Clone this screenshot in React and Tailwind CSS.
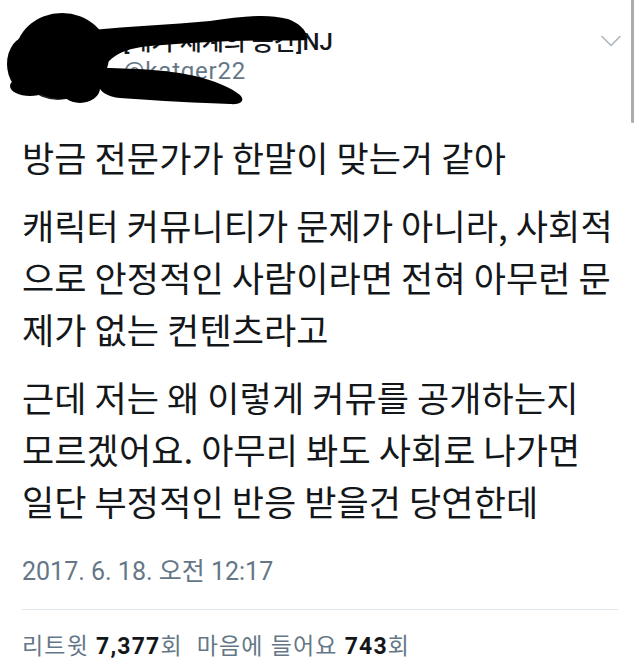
export default function App() {
  const latin = { fontFamily: 'Roboto, "Noto Sans CJK KR", sans-serif' };
  const kr = { fontFamily: '"Noto Sans CJK KR", "Noto Sans", sans-serif' };
  return (
    <div className="relative w-[640px] h-[670px] bg-white overflow-hidden">
      {/* scroll indicator */}
      <div className="absolute top-0 right-[6px] w-[3px] h-[123px] bg-[#ababab] rounded-b-full" />

      {/* header */}
      <div className="flex items-start pl-[16px] pt-[16px] pr-[19px] h-[131px]">
        <div className="w-[84px] h-[84px] rounded-full bg-[#222] shrink-0" />
        <div className="ml-[23px] pt-[11px] flex flex-col" style={latin}>
          <div className="text-[24px] leading-[30px] font-medium text-[#14171a] whitespace-nowrap">
            [캐커 세계의 공간]NJ
          </div>
          <div className="text-[24px] leading-[28px] tracking-[0.8px] text-[#657786] whitespace-nowrap">
            @katger22
          </div>
        </div>
        <div className="ml-auto mt-[19px]">
          <svg width="20" height="12" viewBox="0 0 20 12" fill="none">
            <path d="M1 1.5 L10 10.5 L19 1.5" stroke="#aab8c2" strokeWidth="1.6" strokeLinecap="round" strokeLinejoin="round" />
          </svg>
        </div>
      </div>

      {/* scribble over avatar & name */}
      <svg className="absolute left-0 top-0" width="340" height="120" viewBox="0 0 340 120">
        <g fill="#000">
          <ellipse cx="62" cy="56" rx="47" ry="43" />
          <ellipse cx="28" cy="64" rx="21" ry="28" />
          <ellipse cx="30" cy="86" rx="20" ry="10" />
          <ellipse cx="80" cy="88" rx="20" ry="15" />
          <path d="M92 30 C130 26 170 25 210 21 C240 17 265 13 288 19 C301 24 309 33 306 40 C292 41 262 40 232 41 C202 42 176 44 150 46 C130 48 118 52 108 62 Z" />
          <path d="M98 68 C130 68 170 70 195 76 C215 81 232 88 240 95 C246 101 240 105 230 104 C200 103 160 101 120 98 C108 97 100 92 98 85 Z" />
        </g>
      </svg>

      {/* body */}
      <div className="px-[22px] text-[35px] leading-[52px] tracking-[0.1px] text-[#14171a]" style={kr}>
        <p className="mb-[16px]">방금 전문가가 한말이 맞는거 같아</p>
        <p className="mb-[16px]">
          캐릭터 커뮤니티가 문제가 아니라, 사회적
          <br />
          으로 안정적인 사람이라면 전혀 아무런 문
          <br />
          제가 없는 컨텐츠라고
        </p>
        <p>
          근데 저는 왜 이렇게 커뮤를 공개하는지
          <br />
          모르겠어요. 아무리 봐도 사회로 나가면
          <br />
          일단 부정적인 반응 받을건 당연한데
        </p>
      </div>

      {/* date */}
      <div className="mt-[29px] px-[22px] text-[25px] leading-[32px] text-[#657786]" style={latin}>
        2017. 6. 18. 오전 12:17
      </div>

      <div className="mt-[21px] mx-[22px] h-px bg-[#e1e8ed]" />

      {/* stats */}
      <div className="mt-[22px] px-[22px] text-[23px] leading-[30px] tracking-[1.2px] text-[#657786] whitespace-pre" style={latin}>
        리트윗 <span className="font-bold text-[#14171a]">7,377</span>회{"  "}마음에 들어요 <span className="font-bold text-[#14171a]">743</span>회
      </div>
    </div>
  );
}
